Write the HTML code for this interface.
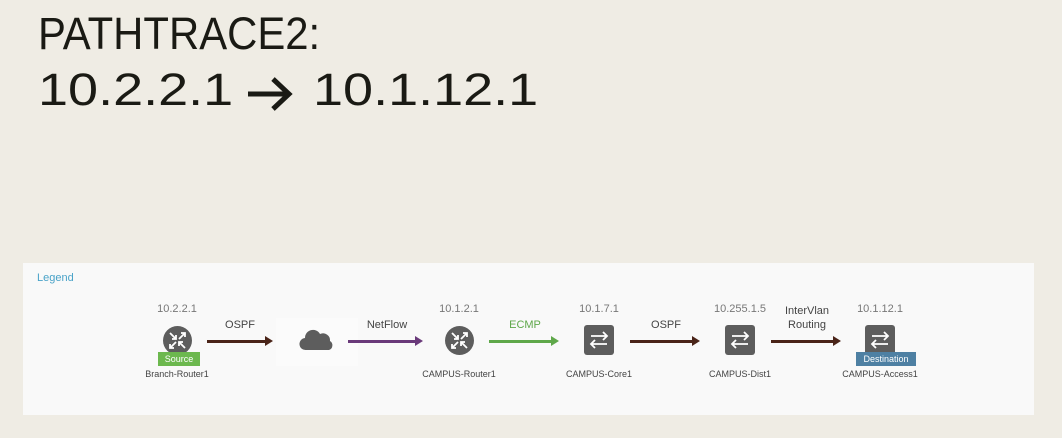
<!DOCTYPE html>
<html><head><style>
body{margin:0;width:1062px;height:438px;background:#efece4;position:relative;overflow:hidden;font-family:"Liberation Sans",sans-serif}
.t{position:absolute;font-size:45px;color:#1a1a14;transform-origin:0 0;white-space:nowrap;line-height:1}
.panel{position:absolute;left:23px;top:263px;width:1011px;height:152px;background:#f9f9f9}
.lg{position:absolute;left:37px;top:272px;font-size:11px;color:#4aa3c8}
.ip{position:absolute;font-size:11px;color:#777;transform:translateX(-50%);white-space:nowrap}
.nm{position:absolute;font-size:9px;color:#444;transform:translateX(-50%);white-space:nowrap;top:369px}
.lb{position:absolute;font-size:11px;color:#444;transform:translateX(-50%);white-space:nowrap;text-align:center;line-height:14px}
.ar{position:absolute;height:3px;top:340px}
.ar:after{content:"";position:absolute;right:-6px;top:-4px;border-left:8px solid;border-left-color:inherit;border-top:5.5px solid transparent;border-bottom:5.5px solid transparent}
.sw{position:absolute;width:30px;height:30px;background:#5d5d5d;border-radius:3px;top:325px}
.rt{position:absolute;width:29px;height:29px;border-radius:50%;background:#5d5d5d;top:326px}
.bd{position:absolute;font-size:9px;color:#fff;text-align:center;line-height:14px;height:14px;top:352px}
</style></head><body>
<div class="t" style="left:38px;top:11px;transform:scaleX(.93)">PATHTRACE2:</div>
<div class="t" style="left:38px;top:67px;transform:scaleX(1.2)">10.2.2.1</div>
<svg style="position:absolute;left:246px;top:75px" width="50" height="38"><path d="M2 19h40M27 4l16 15-16 15" stroke="#1a1a14" stroke-width="5" fill="none"/></svg>
<div class="t" style="left:313px;top:67px;transform:scaleX(1.2)">10.1.12.1</div>
<div class="panel"></div>
<div class="lg">Legend</div>
<div style="position:absolute;left:276px;top:318px;width:82px;height:48px;background:#fbfbfb"></div>

<div class="ip" style="left:177px;top:303px">10.2.2.1</div>
<div class="ip" style="left:459px;top:303px">10.1.2.1</div>
<div class="ip" style="left:599px;top:303px">10.1.7.1</div>
<div class="ip" style="left:740px;top:303px">10.255.1.5</div>
<div class="ip" style="left:880px;top:303px">10.1.12.1</div>

<svg width="0" height="0" style="position:absolute"><defs>
<g id="r" stroke="#fff" stroke-width="1.8" fill="none"><path d="M7 7l6 6M13 9v4h-4M16 13l6-6M18 7h4v4M13 16l-6 6M7 18v4h4M22 22l-6-6M16 20v-4h4"/></g>
<g id="s" stroke="#fff" stroke-width="1.8" fill="none"><path d="M7 11h16M19 7l4 4-4 4M23 19H7M11 15l-4 4 4 4"/></g>
</defs></svg>
<div class="rt" style="left:163px"><svg width="29" height="29"><use href="#r"/></svg></div>
<div class="rt" style="left:445px"><svg width="29" height="29"><use href="#r"/></svg></div>
<div class="sw" style="left:584px"><svg width="30" height="30"><use href="#s"/></svg></div>
<div class="sw" style="left:725px"><svg width="30" height="30"><use href="#s"/></svg></div>
<div class="sw" style="left:865px"><svg width="30" height="30"><use href="#s"/></svg></div>
<svg style="position:absolute;left:299px;top:328px" width="36" height="24"><path d="M7 22a6 6 0 0 1-1-12 8 8 0 0 1 15-4 7 7 0 0 1 10 7 5 5 0 0 1-1 9z" fill="#5d5d5d"/></svg>

<div class="bd" style="left:158px;width:42px;background:#6cb84e">Source</div>
<div class="bd" style="left:856px;width:60px;background:#4e80a3">Destination</div>

<div class="nm" style="left:177px">Branch-Router1</div>
<div class="nm" style="left:459px">CAMPUS-Router1</div>
<div class="nm" style="left:599px">CAMPUS-Core1</div>
<div class="nm" style="left:740px">CAMPUS-Dist1</div>
<div class="nm" style="left:880px">CAMPUS-Access1</div>

<div class="ar" style="left:207px;width:60px;background:#4a2418;border-color:#4a2418"></div>
<div class="ar" style="left:348px;width:69px;background:#6a3a7a;border-color:#6a3a7a"></div>
<div class="ar" style="left:489px;width:64px;background:#5fa84a;border-color:#5fa84a"></div>
<div class="ar" style="left:630px;width:64px;background:#4a2418;border-color:#4a2418"></div>
<div class="ar" style="left:771px;width:64px;background:#4a2418;border-color:#4a2418"></div>

<div class="lb" style="left:240px;top:318px">OSPF</div>
<div class="lb" style="left:387px;top:318px">NetFlow</div>
<div class="lb" style="left:525px;top:318px;color:#5fa84a">ECMP</div>
<div class="lb" style="left:666px;top:318px">OSPF</div>
<div class="lb" style="left:807px;top:304px">InterVlan<br>Routing</div>
</body></html>
